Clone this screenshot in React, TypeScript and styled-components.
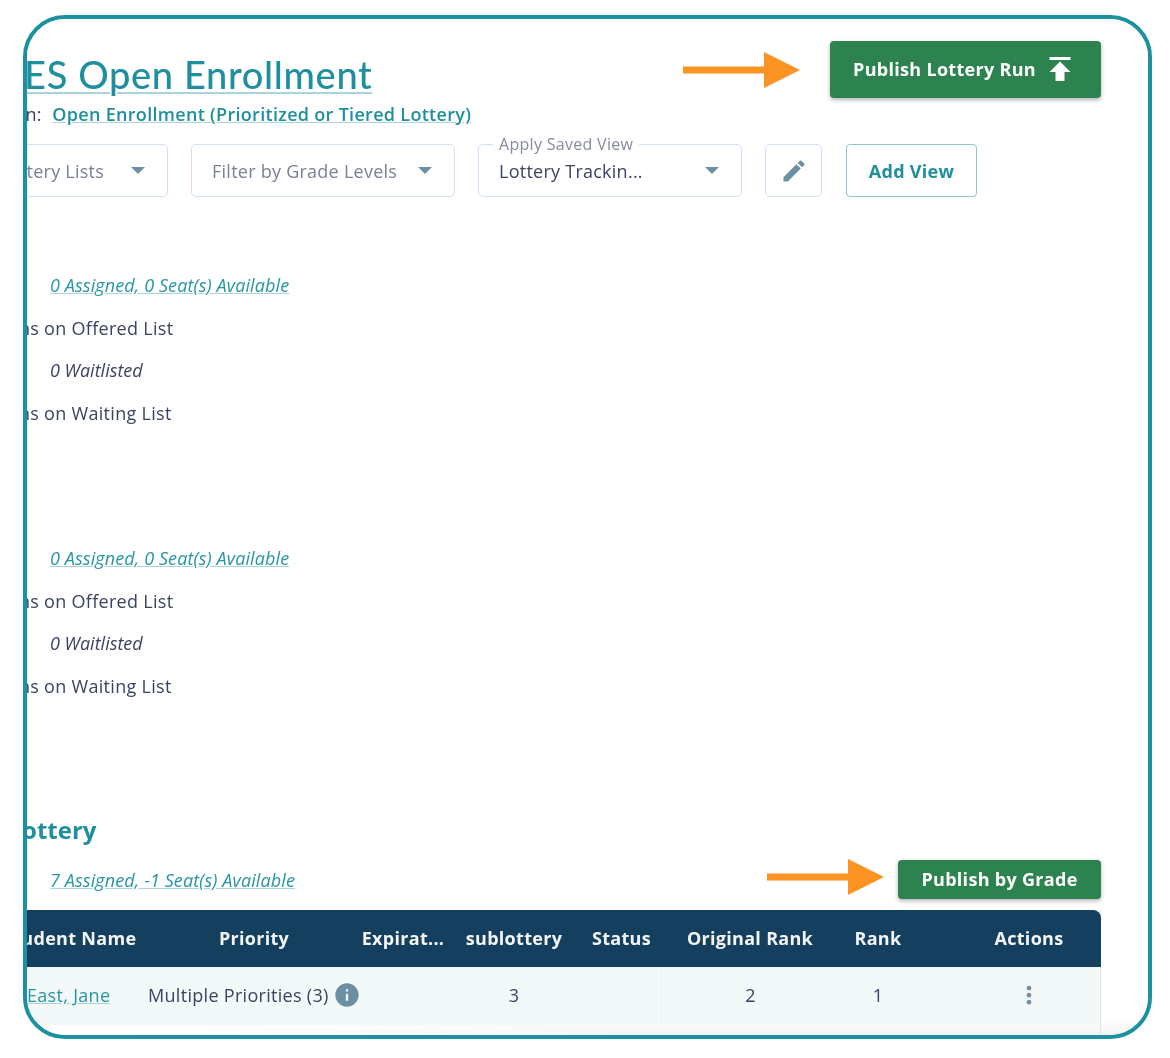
import React from "react";
import styled, { createGlobalStyle } from "styled-components";

const Global = createGlobalStyle`
  html, body { margin: 0; padding: 0; background: #fff; }
  body { font-family: "Open Sans", "Liberation Sans", sans-serif; color: #3b4363; }
  * { box-sizing: border-box; }
`;

const Page = styled.div`
  width: 1170px;
  height: 1058px;
  padding: 15px 18px 19px 23px;
  background: #fff;
`;

const Frame = styled.div`
  height: 100%;
  border: 4px solid #1c919f;
  border-radius: 42px;
  overflow: hidden;
  background: #fff;
`;

const Canvas = styled.div`
  position: relative;
  height: 100%;
  margin-left: -200px;
  padding: 22px 47px 0 0;
  filter: blur(0.45px);
  display: flex;
  flex-direction: column;
  background:
    linear-gradient(to right, #fff 22%, rgba(255, 255, 255, 0) 62%),
    linear-gradient(to bottom, #fff 0, #fff 1000px, #f0f0f0 1019px);
`;

const Header = styled.header`
  display: flex;
  justify-content: space-between;
  align-items: flex-start;
`;

const TitleBlock = styled.div`
  display: flex;
  flex-direction: column;
  align-items: flex-start;
  padding-top: 10px;
`;

const Title = styled.a`
  margin-left: 161px;
  font-family: Lato, "Open Sans", sans-serif;
  font-size: 38px;
  font-weight: 500;
  line-height: 46px;
  letter-spacing: 0.65px;
  color: #1f8f9e;
  text-decoration: underline;
  text-decoration-thickness: 2px;
  text-decoration-color: #a9d5da;
  text-underline-offset: 3px;
  white-space: nowrap;
`;

const Subtitle = styled.div`
  margin-top: 5px;
  padding-left: 109px;
  font-size: 18px;
  line-height: 24px;
  white-space: nowrap;
`;

const SubLink = styled.a`
  margin-left: 11px;
  font-weight: 600;
  letter-spacing: 0.3px;
  color: #1f8f9e;
  text-decoration: underline;
  text-decoration-color: #a9d5da;
`;

const Actions = styled.div<{ $gap: number }>`
  display: flex;
  align-items: center;
  gap: ${(p) => p.$gap}px;
`;

const Arrow = styled.svg<{ $lift: number }>`
  display: block;
  flex: none;
  margin-bottom: ${(p) => p.$lift}px;
`;

const PublishButton = styled.button<{ $w: number; $h: number }>`
  display: flex;
  align-items: center;
  justify-content: center;
  gap: 6px;
  width: ${(p) => p.$w}px;
  height: ${(p) => p.$h}px;
  padding: 0 0 2px;
  border: 0;
  border-radius: 4px;
  background: #2c8350;
  box-shadow: 0 2px 4px rgba(0, 0, 0, 0.3);
  color: #fff;
  font-family: inherit;
  font-size: 18px;
  font-weight: 700;
  letter-spacing: 0.3px;
`;

const Filters = styled.div`
  display: flex;
  align-items: stretch;
  gap: 23px;
  height: 53px;
  margin-top: 18px;
  padding-left: 77px;
`;

const Select = styled.div`
  position: relative;
  display: flex;
  align-items: center;
  justify-content: space-between;
  width: 264px;
  padding: 0 22px 0 20px;
  border: 1px solid #cfe0fa;
  border-radius: 5px;
  background: #fff;
  font-size: 18px;
  letter-spacing: 0.25px;
  color: #7b8195;
  white-space: nowrap;
`;

const SelectValue = styled.span`
  color: #3b4363;
`;

const FloatLabel = styled.span`
  position: absolute;
  top: -12px;
  left: 14px;
  padding: 0 6px;
  background: #fff;
  font-size: 16px;
  line-height: 22px;
  letter-spacing: 0.3px;
  color: #868b9d;
`;

const Caret = styled.i`
  flex: none;
  width: 0;
  height: 0;
  border-left: 7px solid transparent;
  border-right: 7px solid transparent;
  border-top: 7px solid #6c8fa3;
`;

const IconButton = styled.div`
  display: flex;
  align-items: center;
  justify-content: center;
  width: 57px;
  border: 1px solid #cfe0fa;
  border-radius: 5px;
  color: #6c8fa3;
`;

const OutlineButton = styled.div`
  display: flex;
  align-items: center;
  justify-content: center;
  width: 131px;
  margin-left: 1px;
  border: 1px solid #8cc7ce;
  border-radius: 4px;
  font-size: 18px;
  font-weight: 700;
  letter-spacing: 0.3px;
  color: #1f8f9e;
`;

const Section = styled.section<{ $top: number }>`
  display: flex;
  flex-direction: column;
  align-items: flex-start;
  margin-top: ${(p) => p.$top}px;
`;

const SeatLink = styled.a`
  margin-left: 223px;
  font-size: 18px;
  line-height: 24px;
  font-style: italic;
  letter-spacing: 0.1px;
  color: #2796a4;
  text-decoration: underline;
  text-decoration-color: #a9d5da;
  white-space: nowrap;
`;

const ListLine = styled.div`
  margin-top: 19px;
  padding-left: 106px;
  font-size: 18px;
  line-height: 24px;
  letter-spacing: 0.3px;
  white-space: nowrap;
`;

const WaitLine = styled.div`
  margin-top: 18px;
  padding-left: 223px;
  font-size: 18px;
  line-height: 24px;
  font-style: italic;
`;

const LotteryHeading = styled.h2`
  margin: 115px 0 0;
  padding-left: 111px;
  font-size: 24px;
  line-height: 34px;
  font-weight: 700;
  color: #1f8f9e;
  white-space: nowrap;
`;

const LotteryBar = styled.div`
  display: flex;
  align-items: center;
  justify-content: space-between;
  height: 39px;
  margin-top: 13px;
`;

const Table = styled.div`
  flex: 1;
  margin-top: 11px;
  margin-left: 100px;
  border-right: 1px solid #e2e6e8;
`;

const columns = "221px 212px 86px 136px 79px 178px 78px 1fr";

const HeaderRow = styled.div`
  display: grid;
  grid-template-columns: ${columns};
  align-items: center;
  height: 57px;
  margin-right: -1px;
  border-radius: 8px 8px 0 0;
  background: #153f5e;
  color: #f3f6f8;
  font-size: 18px;
  font-weight: 700;
  letter-spacing: 0.3px;
`;

const BodyRow = styled.div`
  display: grid;
  grid-template-columns: ${columns};
  align-items: center;
  height: 58px;
  background: #f3f8f8;
  font-size: 18px;
  letter-spacing: 0.3px;
  color: #3b4363;
`;

const Cell = styled.div<{ $pad?: number; $left?: boolean }>`
  display: flex;
  align-items: center;
  justify-content: ${(p) => (p.$left ? "flex-start" : "center")};
  gap: 4px;
  height: 100%;
  padding-left: ${(p) => p.$pad ?? 0}px;
  padding-bottom: 2px;
  white-space: nowrap;
`;

const DividedCell = styled(Cell)`
  border-left: 1px solid #edf2f3;
`;

const NameLink = styled.a`
  font-size: 18px;
  letter-spacing: 0.3px;
  color: #2796a4;
  text-decoration: underline;
  text-decoration-color: #a9d5da;
`;

const Glyph = styled.svg`
  display: block;
  flex: none;
  fill: currentColor;
`;

const InfoGlyph = styled(Glyph)`
  color: #6c8fa3;
`;

const MoreGlyph = styled(Glyph)`
  color: #6c8fa3;
`;

const OrangeArrow = ({ w, h, lift = 0 }: { w: number; h: number; lift?: number }) => (
  <Arrow $lift={lift} width={w} height={h} viewBox={`0 0 ${w} ${h}`}>
    <path
      d={`M0 ${h / 2 - 3.5}H${w - 36}V0L${w} ${h / 2}L${w - 36} ${h}V${h / 2 + 3.5}H0Z`}
      fill="#fb9322"
    />
  </Arrow>
);

const Stats = () => (
  <>
    <SeatLink>0 Assigned, 0 Seat(s) Available</SeatLink>
    <ListLine>Applications on Offered List</ListLine>
    <WaitLine>0 Waitlisted</WaitLine>
    <ListLine>Applications on Waiting List</ListLine>
  </>
);

export default function App() {
  return (
    <>
      <Global />
      <Page>
        <Frame>
          <Canvas>
            <Header>
              <TitleBlock>
                <Title>MES Open Enrollment</Title>
                <Subtitle>
                  Lottery Plan:
                  <SubLink>Open Enrollment (Prioritized or Tiered Lottery)</SubLink>
                </Subtitle>
              </TitleBlock>
              <Actions $gap={30}>
                <OrangeArrow w={117} h={36} />
                <PublishButton $w={271} $h={57}>
                  Publish Lottery Run
                  <Glyph width={36} height={36} viewBox="0 0 24 24">
                    <path d="M5 4v2h14V4H5zm0 10h4v6h6v-6h4l-7-7-7 7z" />
                  </Glyph>
                </PublishButton>
              </Actions>
            </Header>

            <Filters>
              <Select>
                <span>Filter by Lottery Lists</span>
                <Caret />
              </Select>
              <Select>
                <span>Filter by Grade Levels</span>
                <Caret />
              </Select>
              <Select>
                <FloatLabel>Apply Saved View</FloatLabel>
                <SelectValue>Lottery Trackin...</SelectValue>
                <Caret />
              </Select>
              <IconButton>
                <Glyph width={28} height={28} viewBox="0 0 24 24">
                  <path d="M3 17.25V21h3.75L17.81 9.94l-3.75-3.75L3 17.25zM20.71 7.04c.39-.39.39-1.02 0-1.41l-2.34-2.34c-.39-.39-1.02-.39-1.41 0l-1.83 1.83 3.75 3.75 1.83-1.83z" />
                </Glyph>
              </IconButton>
              <OutlineButton>Add View</OutlineButton>
            </Filters>

            <Section $top={76}>
              <Stats />
            </Section>
            <Section $top={121}>
              <Stats />
            </Section>

            <LotteryHeading>Open Lottery</LotteryHeading>
            <LotteryBar>
              <SeatLink>7 Assigned, -1 Seat(s) Available</SeatLink>
              <Actions $gap={14}>
                <OrangeArrow w={117} h={36} lift={5} />
                <PublishButton $w={203} $h={39}>
                  Publish by Grade
                </PublishButton>
              </Actions>
            </LotteryBar>

            <Table>
              <HeaderRow>
                <Cell $left $pad={76}>Student Name</Cell>
                <Cell>Priority</Cell>
                <Cell>Expirat...</Cell>
                <Cell>sublottery</Cell>
                <Cell>Status</Cell>
                <Cell>Original Rank</Cell>
                <Cell>Rank</Cell>
                <Cell $pad={40}>Actions</Cell>
              </HeaderRow>
              <BodyRow>
                <Cell $left $pad={100}>
                  <NameLink>East, Jane</NameLink>
                </Cell>
                <Cell $left>
                  Multiple Priorities (3)
                  <InfoGlyph width={28} height={28} viewBox="0 0 24 24">
                    <path d="M12 2C6.48 2 2 6.48 2 12s4.48 10 10 10 10-4.48 10-10S17.52 2 12 2zm1 15h-2v-6h2v6zm0-8h-2V7h2v2z" />
                  </InfoGlyph>
                </Cell>
                <Cell />
                <Cell>3</Cell>
                <Cell />
                <DividedCell>2</DividedCell>
                <Cell>1</Cell>
                <Cell $pad={40}>
                  <MoreGlyph width={28} height={28} viewBox="0 0 24 24">
                    <path d="M12 8c1.1 0 2-.9 2-2s-.9-2-2-2-2 .9-2 2 .9 2 2 2zm0 2c-1.1 0-2 .9-2 2s.9 2 2 2 2-.9 2-2-.9-2-2-2zm0 6c-1.1 0-2 .9-2 2s.9 2 2 2 2-.9 2-2-.9-2-2-2z" />
                  </MoreGlyph>
                </Cell>
              </BodyRow>
            </Table>
          </Canvas>
        </Frame>
      </Page>
    </>
  );
}
